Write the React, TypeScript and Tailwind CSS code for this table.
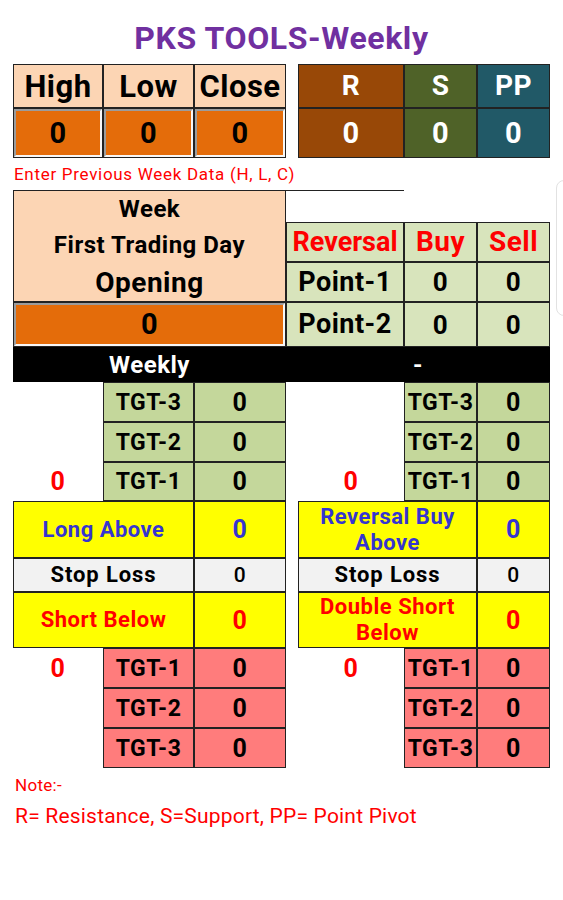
const cell = "flex items-center justify-center border border-[#222]";

const InputBox = ({ value }: { value: string }) => (
  <div className="flex h-full w-full items-stretch border border-[#222] bg-[#f4f4f4]">
    <div className="flex flex-1 items-center justify-center border-2 border-b-[#f7f7f7] border-l-[#9c9c9c] border-r-[#f7f7f7] border-t-[#9c9c9c] bg-[#e46c0a] text-[29px] font-bold text-black">
      {value}
    </div>
  </div>
);

const App = () => {
  return (
    <div className="relative min-h-[900px] w-[563px] bg-white font-['Roboto',sans-serif] text-black">
      <h1 className="pt-[18px] text-center text-[32px] font-bold leading-[40px] tracking-[0.6px] text-[#7030a0]">
        PKS TOOLS-Weekly
      </h1>

      <div className="ml-[13px] mt-[6px] grid grid-cols-[90px_91px_92px_12px_106px_73px_73px] grid-rows-[44px_50px_32px_32px_40px_40px_45px_35px_40px_40px_39px_57px_34px_56px_40px_40px_40px] leading-none tracking-[0.5px]">
        {/* top left: previous week data */}
        <div className={`${cell} col-start-1 row-start-1 bg-[#fcd5b4] text-[31px] font-bold`}>High</div>
        <div className={`${cell} col-start-2 row-start-1 bg-[#fcd5b4] text-[31px] font-bold`}>Low</div>
        <div className={`${cell} col-start-3 row-start-1 bg-[#fcd5b4] text-[31px] font-bold`}>Close</div>
        <div className="col-start-1 row-start-2"><InputBox value="0" /></div>
        <div className="col-start-2 row-start-2"><InputBox value="0" /></div>
        <div className="col-start-3 row-start-2"><InputBox value="0" /></div>

        {/* top right: pivots */}
        <div className={`${cell} col-start-5 row-start-1 bg-[#984807] text-[28px] font-bold text-white`}>R</div>
        <div className={`${cell} col-start-6 row-start-1 bg-[#4f6228] text-[28px] font-bold text-white`}>S</div>
        <div className={`${cell} col-start-7 row-start-1 bg-[#215967] text-[28px] font-bold text-white`}>PP</div>
        <div className={`${cell} col-start-5 row-start-2 bg-[#984807] text-[29px] font-bold text-white`}>0</div>
        <div className={`${cell} col-start-6 row-start-2 bg-[#4f6228] text-[29px] font-bold text-white`}>0</div>
        <div className={`${cell} col-start-7 row-start-2 bg-[#215967] text-[29px] font-bold text-white`}>0</div>

        <div className="col-span-7 col-start-1 row-start-3 flex items-center pl-px text-[17px] tracking-[0.7px] text-[#ff0000]">
          Enter Previous Week Data (H, L, C)
        </div>

        {/* week opening */}
        <div className="col-span-3 col-start-1 row-span-3 row-start-4 flex flex-col items-center border border-[#222] bg-[#fcd5b4] font-bold">
          <span className="mt-[6px] text-[24px]">Week</span>
          <span className="mt-[12px] text-[24px]">First Trading Day</span>
          <span className="mt-[12px] text-[28px]">Opening</span>
        </div>
        <div className="col-span-2 col-start-4 row-start-4 border-t border-[#222]" />
        <div className="col-span-3 col-start-1 row-start-7"><InputBox value="0" /></div>

        {/* reversal */}
        <div className={`${cell} col-span-2 col-start-4 row-start-5 bg-[#d8e4bc] text-[27px] font-bold tracking-normal text-[#ff0000]`}>Reversal</div>
        <div className={`${cell} col-start-6 row-start-5 bg-[#d8e4bc] text-[28px] font-bold text-[#ff0000]`}>Buy</div>
        <div className={`${cell} col-start-7 row-start-5 bg-[#d8e4bc] text-[28px] font-bold text-[#ff0000]`}>Sell</div>
        <div className={`${cell} col-span-2 col-start-4 row-start-6 bg-[#d8e4bc] text-[27px] font-bold`}>Point-1</div>
        <div className={`${cell} col-start-6 row-start-6 bg-[#d8e4bc] text-[26px] font-bold`}>0</div>
        <div className={`${cell} col-start-7 row-start-6 bg-[#d8e4bc] text-[26px] font-bold`}>0</div>
        <div className={`${cell} col-span-2 col-start-4 row-start-7 bg-[#d8e4bc] text-[27px] font-bold`}>Point-2</div>
        <div className={`${cell} col-start-6 row-start-7 bg-[#d8e4bc] text-[26px] font-bold`}>0</div>
        <div className={`${cell} col-start-7 row-start-7 bg-[#d8e4bc] text-[26px] font-bold`}>0</div>

        {/* black bar */}
        <div className="col-span-3 col-start-1 row-start-8 flex items-center justify-center bg-black text-[24px] font-bold text-white">Weekly</div>
        <div className="col-span-4 col-start-4 row-start-8 flex items-center justify-center bg-black text-[24px] font-bold text-white">-</div>

        {/* up targets */}
        {["TGT-3", "TGT-2", "TGT-1"].map((t, i) => (
          <div key={t} className="contents">
            <div className={`${cell} col-start-2 bg-[#c4d79b] text-[23px] font-bold`} style={{ gridRowStart: 9 + i }}>{t}</div>
            <div className={`${cell} col-start-3 bg-[#c4d79b] text-[25px] font-bold`} style={{ gridRowStart: 9 + i }}>0</div>
            <div className={`${cell} col-start-6 bg-[#c4d79b] text-[23px] font-bold`} style={{ gridRowStart: 9 + i }}>{t}</div>
            <div className={`${cell} col-start-7 bg-[#c4d79b] text-[25px] font-bold`} style={{ gridRowStart: 9 + i }}>0</div>
          </div>
        ))}
        <div className="col-start-1 row-start-11 flex items-center justify-center text-[25px] font-bold text-[#ff0000]">0</div>
        <div className="col-start-5 row-start-11 flex items-center justify-center text-[25px] font-bold text-[#ff0000]">0</div>

        {/* long */}
        <div className={`${cell} col-span-2 col-start-1 row-start-12 bg-[#ffff00] text-[22px] font-bold text-[#3535d0]`}>Long Above</div>
        <div className={`${cell} col-start-3 row-start-12 bg-[#ffff00] text-[25px] font-bold text-[#3535d0]`}>0</div>
        <div className={`${cell} col-span-2 col-start-5 row-start-12 bg-[#ffff00] text-center text-[22px] font-bold leading-[26px] text-[#3535d0]`}>Reversal Buy<br />Above</div>
        <div className={`${cell} col-start-7 row-start-12 bg-[#ffff00] text-[25px] font-bold text-[#3535d0]`}>0</div>

        {/* stop loss */}
        <div className={`${cell} col-span-2 col-start-1 row-start-13 bg-[#f2f2f2] text-[22px] font-bold tracking-[0.9px]`}>Stop Loss</div>
        <div className={`${cell} col-start-3 row-start-13 bg-[#f2f2f2] text-[21px] font-medium`}>0</div>
        <div className={`${cell} col-span-2 col-start-5 row-start-13 bg-[#f2f2f2] text-[22px] font-bold tracking-[0.9px]`}>Stop Loss</div>
        <div className={`${cell} col-start-7 row-start-13 bg-[#f2f2f2] text-[21px] font-medium`}>0</div>

        {/* short */}
        <div className={`${cell} col-span-2 col-start-1 row-start-14 bg-[#ffff00] text-[22px] font-bold text-[#ff0000]`}>Short Below</div>
        <div className={`${cell} col-start-3 row-start-14 bg-[#ffff00] text-[25px] font-bold text-[#ff0000]`}>0</div>
        <div className={`${cell} col-span-2 col-start-5 row-start-14 bg-[#ffff00] text-center text-[22px] font-bold leading-[26px] text-[#ff0000]`}>Double Short<br />Below</div>
        <div className={`${cell} col-start-7 row-start-14 bg-[#ffff00] text-[25px] font-bold text-[#ff0000]`}>0</div>

        {/* down targets */}
        {["TGT-1", "TGT-2", "TGT-3"].map((t, i) => (
          <div key={t} className="contents">
            <div className={`${cell} col-start-2 bg-[#ff7c7c] text-[23px] font-bold`} style={{ gridRowStart: 15 + i }}>{t}</div>
            <div className={`${cell} col-start-3 bg-[#ff7c7c] text-[25px] font-bold`} style={{ gridRowStart: 15 + i }}>0</div>
            <div className={`${cell} col-start-6 bg-[#ff7c7c] text-[23px] font-bold`} style={{ gridRowStart: 15 + i }}>{t}</div>
            <div className={`${cell} col-start-7 bg-[#ff7c7c] text-[25px] font-bold`} style={{ gridRowStart: 15 + i }}>0</div>
          </div>
        ))}
        <div className="col-start-1 row-start-15 flex items-center justify-center text-[25px] font-bold text-[#ff0000]">0</div>
        <div className="col-start-5 row-start-15 flex items-center justify-center text-[25px] font-bold text-[#ff0000]">0</div>
      </div>

      <div className="ml-[15px] mt-[6px] text-[17px] leading-[22px] tracking-[0.3px] text-[#ff0000]">Note:-</div>
      <div className="ml-[15px] mt-[7px] text-[21px] leading-[26px] tracking-[0.2px] text-[#ff0000]">
        R= Resistance, S=Support, PP= Point Pivot
      </div>

      {/* scroll handle at the right edge */}
      <div className="absolute left-[556px] top-[180px] h-[136px] w-[20px] rounded-lg border border-[#e2e2e2]" />
    </div>
  );
};

export default App;
